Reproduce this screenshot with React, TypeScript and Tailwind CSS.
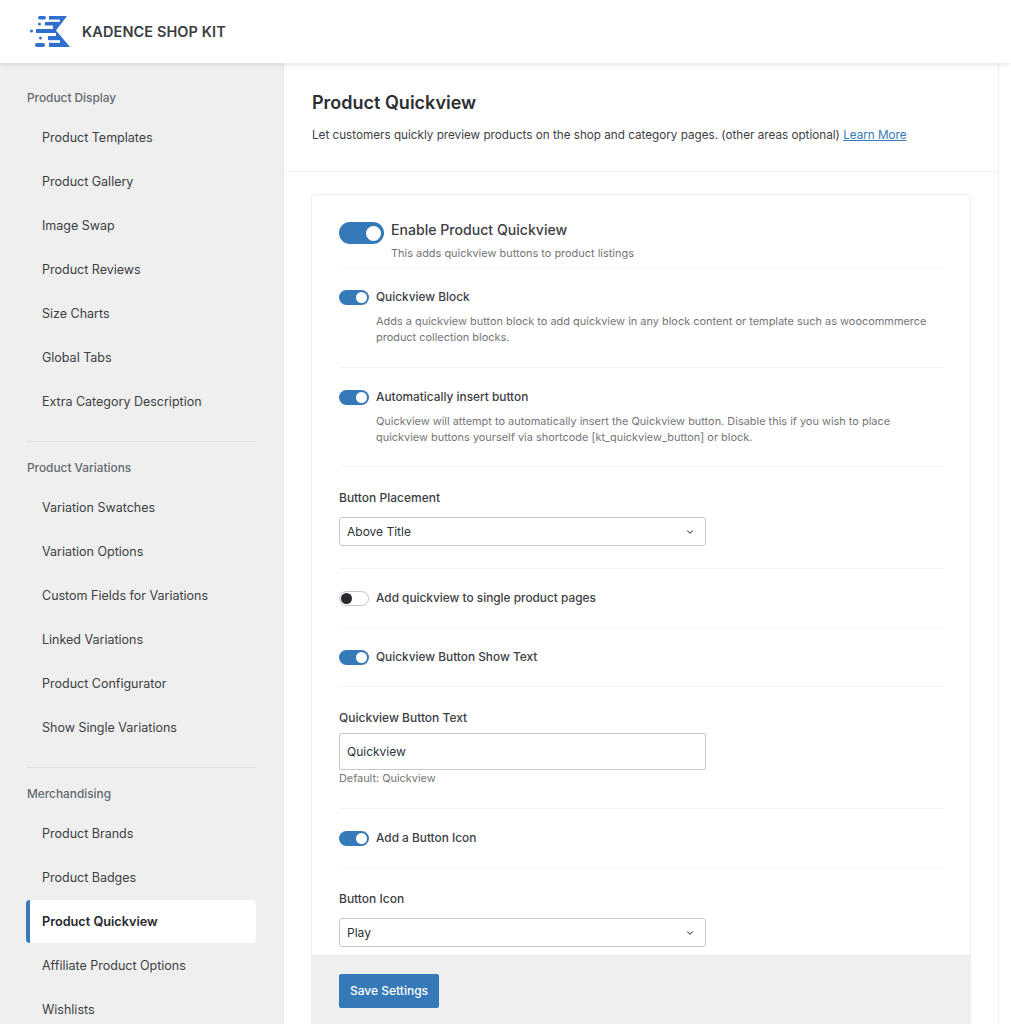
import { ChevronDown } from "lucide-react";

const navGroups = [
  {
    title: "Product Display",
    items: ["Product Templates", "Product Gallery", "Image Swap", "Product Reviews", "Size Charts", "Global Tabs", "Extra Category Description"],
  },
  {
    title: "Product Variations",
    items: ["Variation Swatches", "Variation Options", "Custom Fields for Variations", "Linked Variations", "Product Configurator", "Show Single Variations"],
  },
  {
    title: "Merchandising",
    items: ["Product Brands", "Product Badges", "Product Quickview", "Affiliate Product Options", "Wishlists"],
  },
];

function Logo() {
  return (
    <svg width="42" height="34" viewBox="0 0 42 34" className="shrink-0">
      <g fill="#2f6fd0">
        <path d="M20 1H38L27 15.5L41 32H20V28H20V25H19V21H27V18H7V14H24V10.5H16V7H20Z" />
        <rect x="9" y="1" width="8" height="3.5" rx="1.75" />
        <rect x="9" y="7.5" width="3" height="3" rx="1.5" />
        <rect x="1" y="14.5" width="3" height="3" rx="1.5" />
        <rect x="10" y="21.5" width="3" height="3" rx="1.5" />
        <rect x="6" y="28" width="10" height="4" rx="2" />
      </g>
      <rect x="20" y="4.6" width="11" height="2.2" fill="#fff" />
      <rect x="20" y="25.2" width="11" height="2.6" fill="#fff" />
    </svg>
  );
}

function Toggle({ on = true, large = false }: { on?: boolean; large?: boolean }) {
  if (large) {
    return (
      <span className="flex h-[22px] w-[45px] shrink-0 items-center justify-end rounded-full bg-[#3579b8] pr-[3px]">
        <span className="h-[15px] w-[15px] rounded-full bg-white" />
      </span>
    );
  }
  if (!on) {
    return (
      <span className="flex h-[15px] w-[30px] shrink-0 items-center rounded-full border border-[#c4c4c4] bg-white pl-[1px]">
        <span className="h-[11px] w-[11px] rounded-full bg-[#26292d]" />
      </span>
    );
  }
  return (
    <span className="flex h-[15px] w-[30px] shrink-0 items-center justify-end rounded-full bg-[#3579b8] pr-[2px]">
      <span className="h-[11px] w-[11px] rounded-full bg-white" />
    </span>
  );
}

function ToggleRow({ label, on = true, desc, className }: { label: string; on?: boolean; desc?: string[]; className: string }) {
  return (
    <div className={`border-b border-[#f3f3f3] ${className}`}>
      <div className="flex h-[15px] items-center gap-[7px]">
        <Toggle on={on} />
        <span className="text-[11.85px] font-medium text-[#3c4043]">{label}</span>
      </div>
      {desc && (
        <div className="mt-[8px] pl-[37px] text-[10.95px] leading-[16px] text-[#757575]">
          {desc.map((line) => (
            <div key={line}>{line}</div>
          ))}
        </div>
      )}
    </div>
  );
}

function SelectBox({ value, className }: { value: string; className: string }) {
  return (
    <div className={`flex w-[367px] items-center justify-between rounded-[3px] border border-[#c6c6c6] bg-white pl-[7px] pr-[10px] text-[12px] text-[#2c3338] ${className}`}>
      {value}
      <ChevronDown size={10} strokeWidth={2.5} className="text-[#444]" />
    </div>
  );
}

export default function App() {
  return (
    <div className="h-[1024px] overflow-hidden bg-white font-['Inter',sans-serif]">
      <header className="relative z-10 flex h-[63px] items-center gap-[11px] bg-white pl-[29px] shadow-[0_1px_6px_rgba(0,0,0,0.12)]">
        <Logo />
        <span className="text-[14.5px] font-semibold tracking-[0.1px] text-[#3a3d42]">KADENCE SHOP KIT</span>
      </header>

      <div className="flex">
        <aside className="h-[961px] w-[284px] shrink-0 border-r border-[#e6e6e6] bg-[#efefef] pl-[26px] pr-[27px] pt-[13px]">
          {navGroups.map((group, i) => (
            <div key={group.title} className={i < 2 ? "mb-[4px] border-b border-[#e3e3e3] pb-[17px]" : ""}>
              <div className="flex h-[42px] items-center pl-[1px] pt-[4px] text-[11.85px] font-medium text-[#646970]">{group.title}</div>
              <div className="mt-[-2px]">
                {group.items.map((item) => {
                  const active = item === "Product Quickview";
                  return (
                    <div
                      key={item}
                      className={
                        active
                          ? "mb-[1px] flex h-[43px] items-center rounded-[4px] border-l-[4px] border-[#3579b8] bg-white pl-[12px] text-[12.7px] font-semibold text-[#26292d]"
                          : "flex h-[44px] items-center pl-[16px] text-[12.5px] text-[#3c4043]"
                      }
                    >
                      {item}
                    </div>
                  );
                })}
              </div>
            </div>
          ))}
        </aside>

        <main className="h-[961px] w-[715px] shrink-0 border-r border-[#eeeeee]">
          <div className="h-[109px] border-b border-[#f0f0f0] pl-[28px] pt-[27px]">
            <h1 className="text-[18px] font-semibold leading-[26px] text-[#2b2f33]">Product Quickview</h1>
            <p className="mt-[10px] text-[11.7px] leading-[18px] text-[#3c4043]">
              Let customers quickly preview products on the shop and category pages. (other areas optional){" "}
              <a className="text-[#3579b8] underline">Learn More</a>
            </p>
          </div>

          <div className="ml-[27px] mt-[22px] h-[830px] w-[660px] overflow-hidden rounded-t-[4px] border border-[#eeeeee] bg-white">
            <div className="h-[760px] px-[27px] pt-[27px]">
              <div className="h-[46px] border-b border-[#f3f3f3]">
                <div className="flex gap-[7px]">
                  <Toggle large />
                  <div>
                    <div className="text-[14.1px] font-medium leading-[16px] text-[#3c4043]">Enable Product Quickview</div>
                    <div className="mt-[7px] text-[10.95px] leading-[16px] text-[#757575]">This adds quickview buttons to product listings</div>
                  </div>
                </div>
              </div>

              <ToggleRow
                label="Quickview Block"
                className="h-[100px] pt-[22px]"
                desc={[
                  "Adds a quickview button block to add quickview in any block content or template such as woocommmerce",
                  "product collection blocks.",
                ]}
              />
              <ToggleRow
                label="Automatically insert button"
                className="h-[99px] pt-[22px]"
                desc={[
                  "Quickview will attempt to automatically insert the Quickview button. Disable this if you wish to place",
                  "quickview buttons yourself via shortcode [kt_quickview_button] or block.",
                ]}
              />

              <div className="h-[102px] border-b border-[#f3f3f3] pt-[23px]">
                <div className="text-[12px] font-medium leading-[16px] text-[#3c4043]">Button Placement</div>
                <SelectBox value="Above Title" className="mt-[11px] h-[29px]" />
              </div>

              <ToggleRow label="Add quickview to single product pages" on={false} className="h-[59px] pt-[22px]" />
              <ToggleRow label="Quickview Button Show Text" className="h-[59px] pt-[22px]" />

              <div className="h-[122px] border-b border-[#f3f3f3] pt-[23px]">
                <div className="text-[12px] font-medium leading-[16px] text-[#3c4043]">Quickview Button Text</div>
                <div className="mt-[7px] flex h-[37px] w-[367px] items-center rounded-[2px] border border-[#c6c6c6] pl-[7px] text-[12px] text-[#2c3338]">Quickview</div>
                <div className="mt-[1px] text-[10.9px] leading-[14px] text-[#757575]">Default: Quickview</div>
              </div>

              <ToggleRow label="Add a Button Icon" className="h-[59px] pt-[22px]" />

              <div className="pt-[23px]">
                <div className="text-[12px] font-medium leading-[16px] text-[#3c4043]">Button Icon</div>
                <SelectBox value="Play" className="mt-[11px] h-[29px]" />
              </div>
            </div>

            <div className="h-[70px] border-t border-[#eaeaea] bg-[#efefef] pl-[27px] pt-[18px]">
              <button className="h-[34px] w-[100px] rounded-[2px] bg-[#3579b8] text-[12px] font-medium text-white">Save Settings</button>
            </div>
          </div>
        </main>
      </div>
    </div>
  );
}
